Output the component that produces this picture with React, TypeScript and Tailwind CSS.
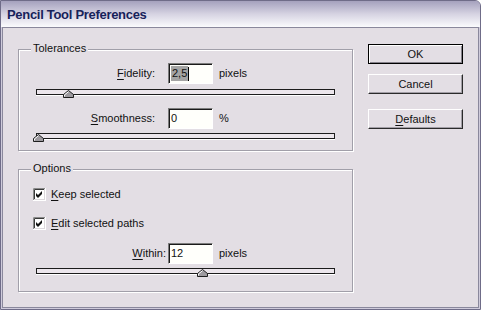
import React from "react";

type SliderProps = {
  pos: number;
};

// the little house-shaped thumb under the track
const Thumb = () => (
  <svg width="11" height="8" viewBox="0 0 11 8">
    <path d="M0.5 7.5 V4.5 L5.5 0.5 L10.5 4.5 V7.5 Z" fill="#9d9a9f" stroke="#1e1e1e" />
    <path d="M1.5 6.5 V4.9 L5.5 1.7" fill="none" stroke="#ffffff" />
  </svg>
);

const Slider = ({ pos }: SliderProps) => {
  return (
    <div className="relative ml-[17px] h-[6px] w-[299px] border border-[#1c1c1c] bg-[#ece6ec] shadow-[0_1px_0_#ffffff]">
      <div className="absolute top-0 flex" style={{ left: pos - 6 }}>
        <Thumb />
      </div>
    </div>
  );
};

const CheckBox = () => (
  <svg width="13" height="13" viewBox="0 0 13 13">
    <rect x="0" y="0" width="13" height="13" fill="#ffffff" />
    <path d="M0.5 12 V0.5 H12" fill="none" stroke="#8a8a8a" />
    <path d="M1.5 11 V1.5 H11" fill="none" stroke="#3a3a3a" />
    <path d="M1 11.5 H12 M11.5 1 V12" fill="none" stroke="#dcd8dc" />
    <path d="M3 5 L5 7 L9 3 V6 L5 10 L3 8 Z" fill="#111111" />
  </svg>
);

const Input = ({ children }: { children: React.ReactNode }) => (
  <div className="flex h-[21px] w-[45px] items-center border border-b-white border-l-[#7c7c7c] border-r-white border-t-[#7c7c7c] bg-[#fffffb] pl-[2px] shadow-[inset_1px_1px_0_#1a1a1a]">
    {children}
  </div>
);

const Group = ({ title, height, children }: { title: string; height: string; children: React.ReactNode }) => (
  <div className={`flex flex-col border border-[#a19fa9] shadow-[inset_1px_1px_0_#ffffff,1px_1px_0_#ffffff] ${height}`}>
    <div className="-mt-[9px] ml-[12px] w-fit bg-[#e3dee4] px-[2px] leading-[14px]">{title}</div>
    {children}
  </div>
);

const btn =
  "flex h-[20px] w-[95px] items-center justify-center bg-[#e3dee4] text-[11px] leading-[13px] text-[#111]";

export default function App() {
  return (
    <div className="flex h-[310px] w-[481px] flex-col overflow-hidden rounded-tr-[6px] border border-[#6f6c88] bg-[#cfcbdb] font-['Liberation_Sans',Arial,sans-serif] text-[11px] leading-[13px] text-[#111]">
      <div className="h-[26px] shrink-0 bg-gradient-to-b from-[#a5a1bd] via-[#d6d3e2] to-[#fbfbfd] pl-[6px] pt-[6px] text-[13px] font-bold leading-[16px] tracking-[-0.3px] text-[#17225a]">
        Pencil Tool Preferences
      </div>
      <div className="mx-[1px] mb-[1px] flex flex-1 border border-[#8a889c] bg-[#e3dee4]">
        <div className="ml-[15px] mt-[21px] flex w-[335px] flex-col">
          <Group title="Tolerances" height="h-[102px]">
            <div className="mt-[8px] flex items-center">
              <div className="w-[136px] text-right">
                <span className="underline underline-offset-[2px]">F</span>idelity:
              </div>
              <div className="ml-[13px]">
                <Input>
                  <span className="bg-[#a4a4a4] px-[1px] leading-[15px]">2,5</span>
                  <span className="h-[14px] w-[1px] bg-black" />
                </Input>
              </div>
              <div className="ml-[6px]">pixels</div>
            </div>
            <div className="mt-[5px]">
              <Slider pos={32} />
            </div>
            <div className="mt-[13px] flex items-center">
              <div className="w-[136px] text-right">
                <span className="underline underline-offset-[2px]">S</span>moothness:
              </div>
              <div className="ml-[13px]">
                <Input>
                  <span className="leading-[15px]">0</span>
                </Input>
              </div>
              <div className="ml-[6px]">%</div>
            </div>
            <div className="mt-[4px]">
              <Slider pos={2} />
            </div>
          </Group>

          <div className="mt-[18px]">
            <Group title="Options" height="h-[123px]">
              <div className="ml-[14px] mt-[13px] flex h-[13px] items-center">
                <CheckBox />
                <div className="ml-[5px]">
                  <span className="underline underline-offset-[2px]">K</span>eep selected
                </div>
              </div>
              <div className="ml-[14px] mt-[16px] flex h-[13px] items-center">
                <CheckBox />
                <div className="ml-[5px]">
                  <span className="underline underline-offset-[2px]">E</span>dit selected paths
                </div>
              </div>
              <div className="mt-[13px] flex items-center">
                <div className="w-[147px] text-right">
                  <span className="underline underline-offset-[2px]">W</span>ithin:
                </div>
                <div className="ml-[2px]">
                  <Input>
                    <span className="leading-[15px]">12</span>
                  </Input>
                </div>
                <div className="ml-[6px]">pixels</div>
              </div>
              <div className="mt-[4px]">
                <Slider pos={166} />
              </div>
            </Group>
          </div>
        </div>

        <div className="ml-[15px] mt-[16px] flex flex-col">
          <button className={`${btn} border border-black shadow-[inset_1px_1px_0_#ffffff,inset_-1px_-1px_0_#85818a]`}>
            OK
          </button>
          <button
            className={`${btn} mt-[10px] border border-b-[#2a2a2a] border-l-white border-r-[#2a2a2a] border-t-white shadow-[inset_-1px_-1px_0_#a29ea6]`}
          >
            Cancel
          </button>
          <button
            className={`${btn} mt-[15px] border border-b-[#2a2a2a] border-l-white border-r-[#2a2a2a] border-t-white shadow-[inset_-1px_-1px_0_#a29ea6]`}
          >
            <span className="underline underline-offset-[2px]">D</span>efaults
          </button>
        </div>
      </div>
    </div>
  );
}
